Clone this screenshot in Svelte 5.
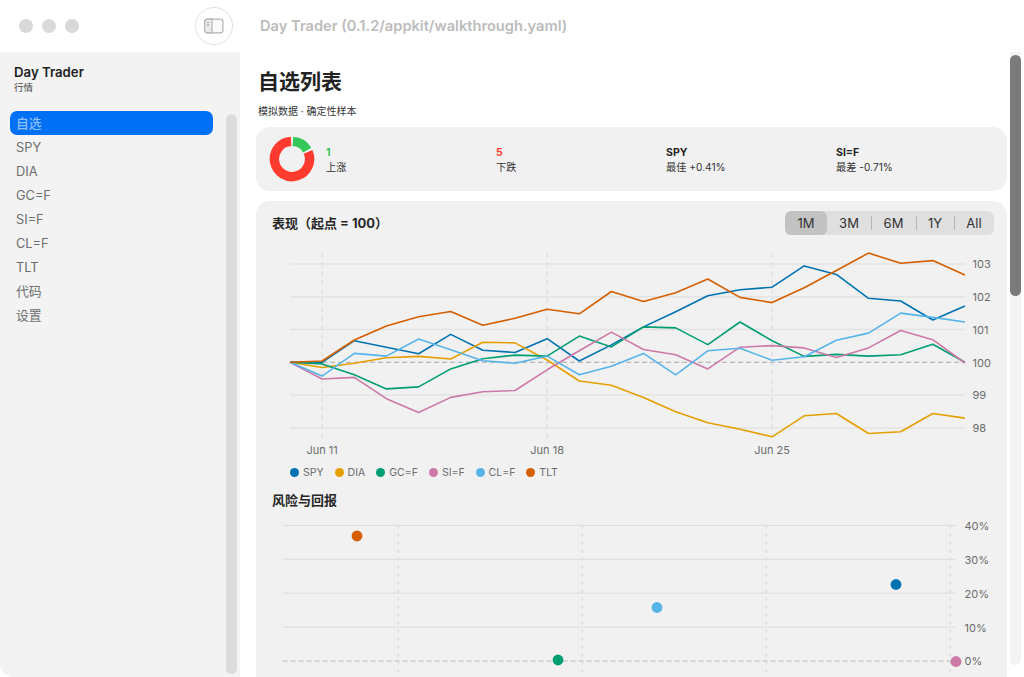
<script>
    const navItems = ['自选', 'SPY', 'DIA', 'GC=F', 'SI=F', 'CL=F', 'TLT', '代码', '设置']
    const ranges = ['1M', '3M', '6M', '1Y', 'All']

    const stats = [
        { value: '1', label: '上涨', tone: 'up' },
        { value: '5', label: '下跌', tone: 'down' },
        { value: 'SPY', label: '最佳 +0.41%', tone: '' },
        { value: 'SI=F', label: '最差 -0.71%', tone: '' }
    ]

    const series = [
        { name: 'SPY', color: '#0072b2', data: [0, 0, .66, .46, .26, .85, .37, .30, .72, .04, .53, 1.08, 1.54, 2.03, 2.21, 2.29, 2.94, 2.68, 1.95, 1.87, 1.29, 1.72] },
        { name: 'DIA', color: '#e69f00', data: [0, -.16, -.03, .14, .18, .10, .61, .59, .07, -.57, -.70, -1.07, -1.51, -1.84, -2.04, -2.27, -1.63, -1.56, -2.17, -2.12, -1.56, -1.70] },
        { name: 'GC=F', color: '#009e73', data: [0, -.05, -.38, -.81, -.75, -.20, .11, .22, .19, .80, .47, 1.08, 1.05, .54, 1.23, .66, .18, .24, .19, .23, .55, 0] },
        { name: 'SI=F', color: '#cc79a7', data: [0, -.51, -.46, -1.11, -1.53, -1.07, -.90, -.86, -.23, .35, .92, .39, .23, -.20, .46, .51, .44, .15, .44, .97, .69, -.02] },
        { name: 'CL=F', color: '#56b4e9', data: [0, -.42, .27, .19, .71, .38, .05, -.03, .19, -.38, -.12, .27, -.38, .35, .43, .06, .17, .67, .89, 1.50, 1.37, 1.23] },
        { name: 'TLT', color: '#d55e00', data: [0, .04, .68, 1.11, 1.39, 1.55, 1.13, 1.34, 1.62, 1.48, 2.16, 1.85, 2.12, 2.54, 1.98, 1.82, 2.27, 2.80, 3.33, 3.02, 3.10, 2.66] }
    ]

    // line chart scale
    const lineX = (i) => 18 + i * 32.14
    const lineY = (v) => 117.3 - v * 32.8
    const points = (data) => data.map((v, i) => `${lineX(i).toFixed(1)},${lineY(v).toFixed(1)}`).join(' ')
    const lineTicks = [103, 102, 101, 99, 98]
    const lineDates = [{ i: 1, label: 'Jun 11' }, { i: 8, label: 'Jun 18' }, { i: 15, label: 'Jun 25' }]

    // scatter scale
    const riskY = (pct) => 146 - pct * 3.39
    const riskTicks = [40, 30, 20, 10]
    const riskVerticals = [126.3, 310.3, 494.3, 678.3]
    const riskDots = [
        { x: 85, y: 21, color: '#d55e00' },
        { x: 286, y: 145, color: '#009e73' },
        { x: 385, y: 92.5, color: '#56b4e9' },
        { x: 624, y: 69.5, color: '#0072b2' },
        { x: 684, y: 146.5, color: '#cc79a7' }
    ]

    function arc(from, to, r) {
        const pt = (deg) => {
            const a = (deg - 90) * Math.PI / 180
            return `${(23 + r * Math.cos(a)).toFixed(2)} ${(23 + r * Math.sin(a)).toFixed(2)}`
        }
        return `M${pt(from)}A${r} ${r} 0 ${to - from > 180 ? 1 : 0} 1 ${pt(to)}`
    }
</script>

<div class="window">
    <header class="titlebar">
        <div class="lights">
            <span></span>
            <span></span>
            <span></span>
        </div>
        <button class="toggle" aria-label="切换侧边栏">
            <svg width="20" height="16" viewBox="0 0 20 16" fill="none">
                <rect x="0.7" y="1.2" width="18.2" height="13.6" rx="2.6" stroke="#b4b4b4" stroke-width="1.2" fill="#fafafa"/>
                <path d="M3.3 1.2H8V14.8H3.3A2.6 2.6 0 0 1 .7 12.2V3.8A2.6 2.6 0 0 1 3.3 1.2Z" fill="#ececec" stroke="#b4b4b4" stroke-width="1.2"/>
                <path d="M3 4.5H5M3 6.8H5" stroke="#a0a0a0" stroke-width="1.2"/>
            </svg>
        </button>
        <div class="window-title">Day Trader (0.1.2/appkit/walkthrough.yaml)</div>
    </header>

    <div class="body">
        <aside class="sidebar">
            <div class="side-col">
                <div class="brand">
                    <div class="brand-name">Day Trader</div>
                    <div class="brand-sub">行情</div>
                </div>
                <nav>
                    {#each navItems as item, i (item)}
                        <div class="nav-item" class:active={i === 0}>{item}</div>
                    {/each}
                </nav>
            </div>
            <div class="side-scroll"></div>
        </aside>

        <main>
            <div class="content">
                <h1>自选列表</h1>
                <p class="sub">模拟数据 · 确定性样本</p>

                <section class="card summary">
                    <svg class="donut" width="46" height="46" viewBox="0 0 46 46" fill="none">
                        <path d={arc(3, 60, 17.6)} stroke="#34c759" stroke-width="9.4"/>
                        <path d={arc(66, 357, 17.6)} stroke="#ff3b30" stroke-width="9.4"/>
                    </svg>
                    <div class="stats">
                        {#each stats as stat (stat.label)}
                            <div>
                                <div class="stat-value {stat.tone}">{stat.value}</div>
                                <div class="stat-label">{stat.label}</div>
                            </div>
                        {/each}
                    </div>
                </section>

                <section class="card charts">
                    <div class="chart-head">
                        <h2>表现（起点 = 100）</h2>
                        <div class="segments">
                            {#each ranges as range, i (range)}
                                <div class="segment" class:selected={i === 0} class:divided={i > 1}>{range}</div>
                            {/each}
                        </div>
                    </div>

                    <svg class="line-chart" width="722" height="216" viewBox="0 0 722 216" fill="none">
                        {#each lineTicks as t (t)}
                            <line x1="18" x2="693" y1={lineY(t - 100)} y2={lineY(t - 100)} stroke="#e3e3e3" stroke-width="1.5"/>
                        {/each}
                        {#each lineDates as d (d.label)}
                            <line x1={lineX(d.i)} x2={lineX(d.i)} y1="8" y2="194" stroke="#dedede" stroke-width="1.2" stroke-dasharray="5 4"/>
                            <text x={lineX(d.i)} y="209" text-anchor="middle" class="axis">{d.label}</text>
                        {/each}
                        <line x1="18" x2="693" y1={lineY(0)} y2={lineY(0)} stroke="#a9a9a9" stroke-width="1.1" stroke-dasharray="5 3"/>
                        {#each series as s (s.name)}
                            <polyline points={points(s.data)} stroke={s.color} stroke-width="1.6" stroke-linejoin="round"/>
                        {/each}
                        {#each [103, 102, 101, 100, 99, 98] as t (t)}
                            <text x="700.5" y={lineY(t - 100) + 4.2} class="axis">{t}</text>
                        {/each}
                    </svg>

                    <div class="legend">
                        {#each series as s (s.name)}
                            <div class="legend-item">
                                <span class="dot" style="background: {s.color}"></span>
                                <span>{s.name}</span>
                            </div>
                        {/each}
                    </div>

                    <h2 class="risk-title">风险与回报</h2>

                    <svg class="risk-chart" width="722" height="170" viewBox="0 0 722 170" fill="none">
                        {#each riskTicks as t (t)}
                            <line x1="10.7" x2="684" y1={riskY(t)} y2={riskY(t)} stroke="#dcdcdc" stroke-width="1"/>
                        {/each}
                        {#each riskVerticals as x (x)}
                            <line x1={x} x2={x} y1="10" y2="170" stroke="#d8d8d8" stroke-width="1" stroke-dasharray="4 4"/>
                        {/each}
                        <line x1="10.7" x2="684" y1={riskY(0)} y2={riskY(0)} stroke="#bcbcbc" stroke-width="1.1" stroke-dasharray="5 3"/>
                        {#each riskDots as d (d.x)}
                            <circle cx={d.x} cy={d.y} r="5.4" fill={d.color}/>
                        {/each}
                        {#each [40, 30, 20, 10, 0] as t (t)}
                            <text x="692.5" y={riskY(t) + 4.4} class="axis">{t}%</text>
                        {/each}
                    </svg>
                </section>
            </div>

            <div class="main-scroll">
                <div class="thumb"></div>
            </div>
        </main>
    </div>
</div>

<style>
    :global(body) {
        margin: 0;
        background: #fff;
        overflow: hidden;
    }
    .window {
        width: 1024px;
        height: 677px;
        display: flex;
        flex-direction: column;
        overflow: hidden;
        font-family: Inter, "Noto Sans CJK SC", sans-serif;
        color: #222;
    }
    .titlebar {
        flex: 0 0 52px;
        display: flex;
        align-items: center;
    }
    .lights {
        display: flex;
        gap: 9px;
        padding-left: 19px;
    }
    .lights span {
        width: 14px;
        height: 14px;
        border-radius: 50%;
        background: #d9d9d9;
    }
    .toggle {
        width: 38px;
        height: 38px;
        margin-left: 116px;
        padding: 0;
        display: flex;
        align-items: center;
        justify-content: center;
        background: #fff;
        border: 1px solid #e2e2e2;
        border-radius: 50%;
    }
    .window-title {
        margin-left: 27px;
        font-size: 14.65px;
        font-weight: 600;
        color: #bcbcbc;
    }
    .body {
        flex: 1;
        min-height: 0;
        display: flex;
    }
    .sidebar {
        width: 240px;
        display: flex;
        background: #f3f3f3;
        border-bottom-left-radius: 14px;
    }
    .side-col {
        width: 226px;
    }
    .brand {
        padding: 12px 14px 0;
    }
    .brand-name {
        font-size: 13.2px;
        font-weight: 600;
        line-height: 16px;
    }
    .brand-sub {
        font-size: 9.5px;
        line-height: 16px;
        color: #444;
    }
    nav {
        margin-top: 15px;
        padding: 0 13px 0 10px;
    }
    .nav-item {
        height: 24px;
        padding-left: 6px;
        font-size: 12.8px;
        line-height: 26px;
        color: #6e6e6e;
        border-radius: 7px;
    }
    .nav-item.active {
        background: #0070f5;
        color: #8fc1fb;
        font-weight: 500;
    }
    .side-scroll {
        width: 11px;
        margin: 62px 0 3px;
        background: #dcdcdc;
        border-radius: 6px;
    }
    main {
        flex: 1;
        min-width: 0;
        display: flex;
    }
    .content {
        width: 767px;
        padding-left: 16px;
        box-sizing: border-box;
        overflow: hidden;
    }
    h1 {
        margin: 16px 0 0 2px;
        font-size: 21px;
        font-weight: 700;
        line-height: 28px;
    }
    .sub {
        margin: 8px 0 0 2px;
        font-size: 10px;
        line-height: 14px;
        color: #333;
    }
    .card {
        width: 751px;
        box-sizing: border-box;
        background: #f1f1f1;
        border-radius: 14px;
    }
    .summary {
        height: 64px;
        margin-top: 9px;
        padding: 0 11px 0 13px;
        display: flex;
        align-items: center;
        gap: 11px;
    }
    .donut {
        flex: none;
    }
    .stats {
        flex: 1;
        display: grid;
        grid-template-columns: repeat(4, 1fr);
        gap: 10px;
        padding-top: 2px;
    }
    .stat-value {
        font-size: 10.5px;
        font-weight: 700;
        line-height: 15px;
    }
    .stat-value.up {
        color: #34c759;
    }
    .stat-value.down {
        color: #ff3b30;
    }
    .stat-label {
        font-size: 10.2px;
        line-height: 15px;
        color: #333;
    }
    .charts {
        margin-top: 10px;
        padding: 10px 13px 0 16px;
        height: 520px;
    }
    .chart-head {
        display: flex;
        align-items: center;
        justify-content: space-between;
    }
    h2 {
        margin: 0;
        font-size: 13px;
        font-weight: 700;
        line-height: 18px;
        color: #282828;
    }
    .segments {
        display: flex;
        height: 24px;
        background: #dfdfdf;
        border-radius: 6px;
        font-size: 13px;
    }
    .segment {
        position: relative;
        width: 44px;
        text-align: center;
        line-height: 24px;
        color: #333;
    }
    .segment:nth-child(1) {
        width: 42px;
    }
    .segment:nth-child(3) {
        width: 45px;
    }
    .segment:nth-child(4) {
        width: 38px;
    }
    .segment:nth-child(5) {
        width: 40px;
    }
    .segment.selected {
        background: #c2c2c2;
        border-radius: 6px;
    }
    .segment.divided::before {
        content: '';
        position: absolute;
        left: 0;
        top: 5px;
        bottom: 5px;
        width: 1px;
        background: #b4b4b4;
    }
    .line-chart {
        display: block;
        margin-top: 10px;
    }
    .axis {
        font-size: 11px;
        fill: #6c6c6c;
    }
    .legend {
        display: flex;
        gap: 11px;
        height: 16px;
        margin: 3px 0 0 18px;
        align-items: center;
        font-size: 10.5px;
        color: #6c6c6c;
    }
    .legend-item {
        display: flex;
        align-items: center;
        gap: 4px;
    }
    .dot {
        width: 9px;
        height: 9px;
        border-radius: 50%;
    }
    .risk-title {
        margin-top: 11px;
    }
    .risk-chart {
        display: block;
        margin-top: 6px;
    }
    .main-scroll {
        width: 11px;
        margin-left: 3px;
        height: 613px;
        background: #f3f3f3;
        border-radius: 0 0 6px 6px;
    }
    .thumb {
        height: 241px;
        margin-top: 3px;
        background: #7a7a7a;
        border-radius: 6px;
    }
</style>
